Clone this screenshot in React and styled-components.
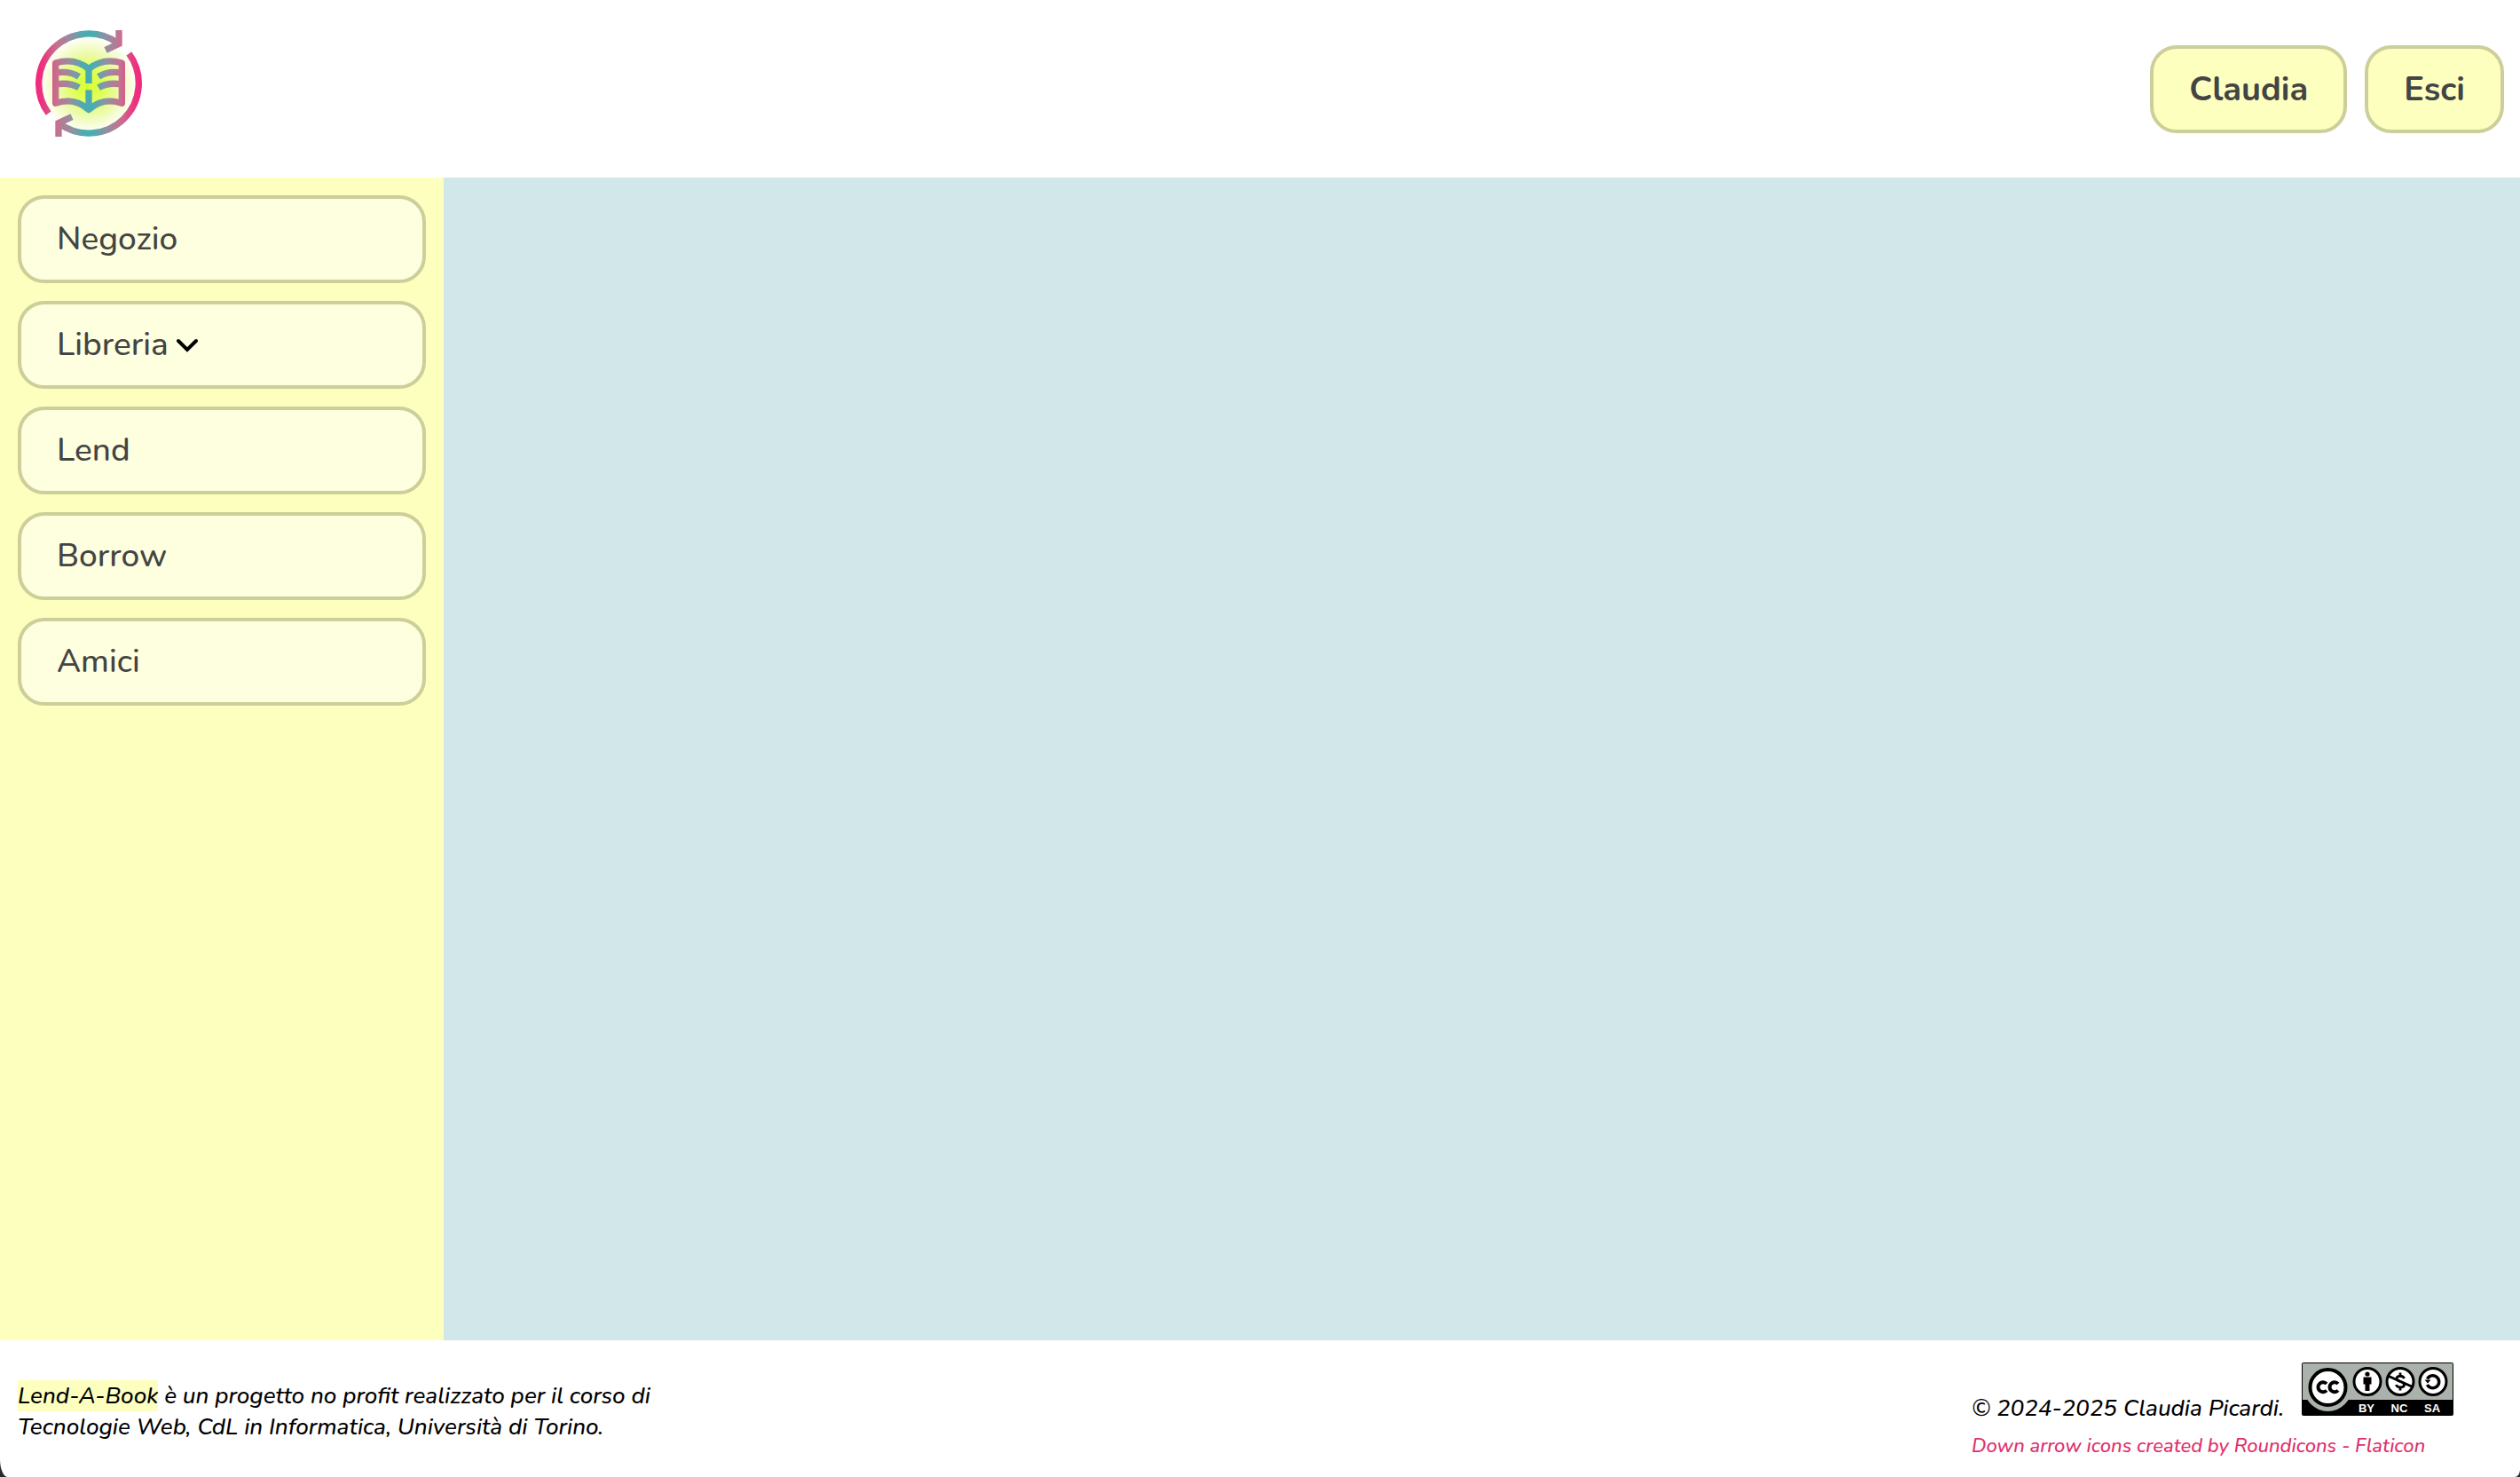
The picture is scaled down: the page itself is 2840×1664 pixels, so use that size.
import React from "react";
import styled, { createGlobalStyle } from "styled-components";

const GlobalStyle = createGlobalStyle`
  * { box-sizing: border-box; }
  html, body { margin: 0; background: #2a2a2c; }
  body { font-family: Nunito, Lato, "Open Sans", sans-serif; color: #000; }
`;

const Page = styled.div`
  min-height: 100vh;
  display: grid;
  grid-template: 200px 1fr auto / 500px 1fr;
  background: #fff;
  border-radius: 0 0 6px 9px / 0 0 8px 20px;
  overflow: hidden;
`;

const Header = styled.header`
  grid-column: 1 / -1;
  display: flex;
  justify-content: space-between;
  align-items: center;
  padding: 0 18px 0 40px;
`;

const HomeLink = styled.a`
  display: block;
  padding-bottom: 12px;
  svg { display: block; }
`;

const Account = styled.div`
  display: flex;
  gap: 20px;
  padding-top: 1px;
`;

const Button = styled.button`
  display: flex;
  align-items: center;
  gap: 9px;
  height: 99px;
  padding: 0 40px;
  border: 4px solid #cccf99;
  border-radius: 30px;
  background: ${(p) => (p.$light ? "#feffdf" : "#fdffbf")};
  color: #444;
  font-family: inherit;
  font-size: ${(p) => (p.$light ? "37px" : "38px")};
  font-weight: ${(p) => (p.$light ? 500 : 700)};
  line-height: 51px;
`;

const Sidebar = styled.nav`
  display: flex;
  flex-direction: column;
  gap: 20px;
  padding: 20px;
  background: #fdffbf;
`;

const Main = styled.main`
  background: #d2e7e9;
`;

const Footer = styled.footer`
  grid-column: 1 / -1;
  display: flex;
  justify-content: space-between;
  align-items: flex-start;
  padding: 25px 20px 20px;
  font-size: 26px;
  font-weight: 500;
  line-height: 35px;
  font-style: italic;
`;

const About = styled.p`
  margin: 20px 0 0;
  max-width: 740px;
`;

const Mark = styled.mark`
  background: #fdffbf;
  color: inherit;
`;

const Credits = styled.div`
  width: 598px;
`;

const License = styled.div`
  display: flex;
  align-items: baseline;
  gap: 20px;
  margin-bottom: 10px;
  a { display: block; }
  svg { display: block; }
`;

const IconCredit = styled.a`
  display: block;
  color: #e02f6b;
  font-size: 22px;
  line-height: 30px;
  text-decoration: none;
`;

function Logo() {
  return (
    <svg width="120" height="120" viewBox="60 72 360 360" role="img" aria-label="Lend-A-Book">
      <defs>
        <linearGradient id="ink" gradientUnits="userSpaceOnUse" x1="60" y1="0" x2="420" y2="0">
          <stop offset="0" stopColor="#f5257c" />
          <stop offset="0.07" stopColor="#ea3580" />
          <stop offset="0.2" stopColor="#c77090" />
          <stop offset="0.34" stopColor="#8f91a2" />
          <stop offset="0.44" stopColor="#52a9b1" />
          <stop offset="0.5" stopColor="#46adb2" />
          <stop offset="0.56" stopColor="#52a9b1" />
          <stop offset="0.66" stopColor="#8f91a2" />
          <stop offset="0.8" stopColor="#c77090" />
          <stop offset="0.93" stopColor="#ea3580" />
          <stop offset="1" stopColor="#f5257c" />
        </linearGradient>
        <radialGradient id="glow" gradientUnits="userSpaceOnUse" cx="240" cy="256" r="165">
          <stop offset="0" stopColor="#d9ff2e" />
          <stop offset="0.3" stopColor="#dfff55" />
          <stop offset="0.65" stopColor="#edfbae" />
          <stop offset="1" stopColor="#fff" />
        </radialGradient>
      </defs>
      <circle cx="240" cy="252" r="165" fill="url(#glow)" />
      <g fill="none" stroke="url(#ink)" strokeWidth="22">
        <path d="M104 353A169 169 0 0 1 342 118" />
        <path d="M342 72V118L297 139" />
        <path d="M376 151A169 169 0 0 1 138 386" />
        <path d="M138 432V386L183 365" />
        <path strokeLinejoin="round" d="M128 183Q192 164 240 203Q288 164 352 183V319Q288 297 240 341Q192 297 128 319Z" />
        <path d="M240 200V252M240 274V340" />
        <path d="M136 215Q178 210 207 229M136 254Q178 249 207 266M344 215Q302 210 273 229M344 254Q302 249 273 266" />
      </g>
    </svg>
  );
}

function Chevron() {
  return (
    <svg width="24" height="16" viewBox="0 0 24 16" aria-hidden="true">
      <path d="M2 3L12 13L22 3" fill="none" stroke="#000" strokeWidth="4" strokeLinecap="round" />
    </svg>
  );
}

function LicenseBadge() {
  return (
    <svg width="171" height="60" viewBox="0 0 171 60" role="img" aria-label="CC BY-NC-SA" fontFamily="Liberation Sans, Arial, sans-serif" fontStyle="normal" fontWeight="700">
      <rect width="171" height="60" rx="2" fill="#000" />
      <path d="M1 1H170V42H1Z" fill="#aab2ab" />
      <circle cx="29.500" cy="28" r="27" fill="#aab2ab" />
      <circle cx="29.500" cy="28" r="20" fill="#fff" stroke="#000" strokeWidth="4" />
      <g fill="none" stroke="#000" strokeWidth="4">
        <path d="M28 24A5.500 5.500 0 1 0 28 31.500" />
        <path d="M41 24A5.500 5.500 0 1 0 41 31.500" />
      </g>
      <g fill="#fff" stroke="#000" strokeWidth="3">
        <circle cx="74" cy="21.500" r="15" />
        <circle cx="111" cy="21.500" r="15" />
        <circle cx="148" cy="21.500" r="15" />
      </g>
      <circle cx="74" cy="13" r="2.600" />
      <path d="M69.500 16.500H78.500V24.500H76.500V32H71.500V24.500H69.500Z" />
      <path d="M115.500 18C114 14 106.500 14.500 107 18.500C107.500 22 115.500 21 115.500 25C115.500 29 107.500 29 106.500 25M111 11.500V15.500M111 27.500V31.500" fill="none" stroke="#000" strokeWidth="2.800" />
      <path d="M97 15L125 27.500" stroke="#000" strokeWidth="3" />
      <path d="M141.500 18.500A7 7 0 1 1 141.500 25" fill="none" stroke="#000" strokeWidth="3.500" />
      <path d="M138.500 19.500H145.500L142 23.500Z" />
      <g fill="#fff" fontSize="13" textAnchor="middle">
        <text x="73" y="56">BY</text>
        <text x="110" y="56">NC</text>
        <text x="147" y="56">SA</text>
      </g>
    </svg>
  );
}

const sections = [
  { label: "Negozio" },
  { label: "Libreria", menu: true },
  { label: "Lend" },
  { label: "Borrow" },
  { label: "Amici" },
];

export default function App() {
  return (
    <>
      <GlobalStyle />
      <Page>
        <Header>
          <HomeLink href="#"><Logo /></HomeLink>
          <Account>
            <Button>Claudia</Button>
            <Button>Esci</Button>
          </Account>
        </Header>
        <Sidebar>
          {sections.map((s) => (
            <Button $light key={s.label}>
              {s.label}
              {s.menu && <Chevron />}
            </Button>
          ))}
        </Sidebar>
        <Main />
        <Footer>
          <About>
            <Mark>Lend-A-Book</Mark> è un progetto no profit realizzato per il corso di Tecnologie Web, CdL in Informatica, Università di Torino.
          </About>
          <Credits>
            <License>
              <span>© 2024-2025 Claudia Picardi.</span>
              <a href="#license"><LicenseBadge /></a>
            </License>
            <IconCredit href="#icons">Down arrow icons created by Roundicons - Flaticon</IconCredit>
          </Credits>
        </Footer>
      </Page>
    </>
  );
}
